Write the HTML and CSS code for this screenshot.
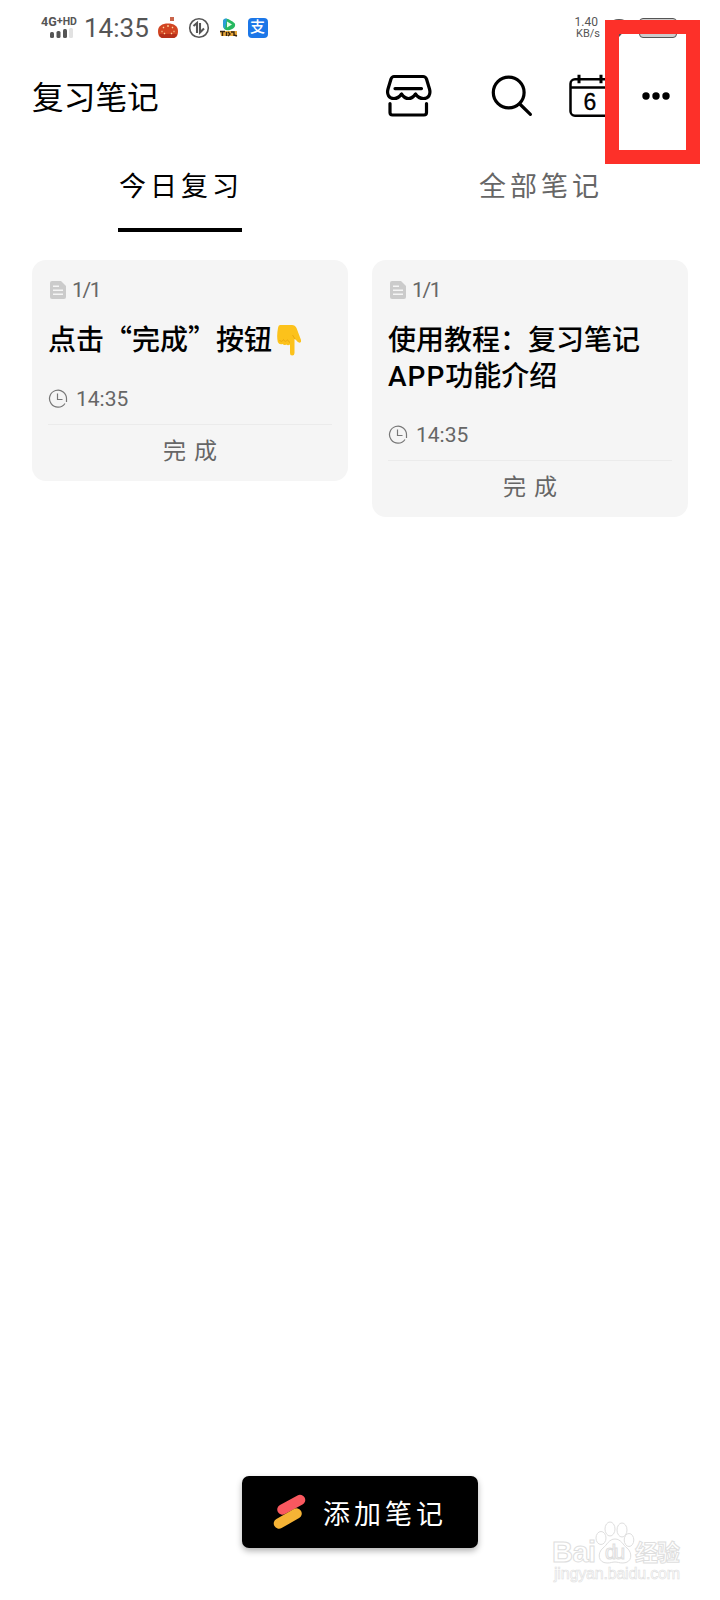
FILE: index.html
```html
<!DOCTYPE html>
<html lang="zh-CN">
<head>
<meta charset="utf-8">
<title>复习笔记</title>
<link rel="stylesheet" href="styles.css">
</head>
<body>
  <div class="status">
    <div class="signal">
      <span class="net">4G<sup>+</sup><small>HD</small></span>
      <svg width="24" height="10" viewBox="0 0 24 10">
        <g fill="#555">
          <rect x="0" y="4" width="4" height="6" rx="1.5"/>
          <rect x="6.500" y="3" width="4" height="7" rx="1.5"/>
          <rect x="13" y="1" width="4" height="9" rx="1.5"/>
        </g>
        <rect x="19" y="0" width="4" height="10" rx="1.5" fill="#e2e2e2"/>
      </svg>
    </div>
    <span class="time">14:35</span>
    <div class="apps">
      <svg width="22" height="22" viewBox="0 0 22 22">
        <rect x="13" y="0" width="4" height="4" fill="#c9654b"/>
        <path d="M1 14c0-5 4-7.500 10-7.500S21 9 21 14s-2 7-5 7H6c-3 0-5-2-5-7z" fill="#d24522"/>
        <path d="M2 17h18q-1 4-4 4H6q-3 0-4-4z" fill="#b5301b"/>
        <path d="M6 10l1 1M11 8v2M16 10l-1 1M4.500 14.500h1M17.500 14.500h-1M7 17l1-1M15 17l-1-1" stroke="#ffd9a0" stroke-width="1.300"/>
      </svg>
      <svg width="22" height="22" viewBox="0 0 22 22" fill="none" stroke="#555">
        <circle cx="11" cy="11" r="9.300" stroke-width="1.600"/>
        <path d="M5.500 9L9 6v10M12 6v9.500l4-4" stroke-width="2.100"/>
      </svg>
      <svg width="22" height="22" viewBox="0 0 22 22">
        <path d="M5 5c0-4 4-4 7-2s6 3 5 6-6 5-9 4-3-4-3-8z" fill="#26b860"/>
        <path d="M5 5c0-3 2-4 4-3.200L7 12c-2-1-2-4-2-7z" fill="#2b9edb"/>
        <path d="M9 4.500l5 3-5 3z" fill="#e8ffe8"/>
        <path d="M2 14h17v5H3z" fill="#e8a83c"/>
        <path d="M2 14.500h5M4.500 15v4M8.500 19v-4M10 15l2 2-2 2M13 15h3v4M16 18l3 1" stroke="#38250f" stroke-width="1.400" fill="none"/>
      </svg>
      <span class="alipay">支</span>
    </div>
    <div class="speed"><span>1.40</span><span>KB/s</span></div>
    <svg class="wifi" width="26" height="20" viewBox="0 0 26 20">
      <path d="M1 6q12-10 24 0L13 19z" fill="#555"/>
    </svg>
    <span class="battery"></span>
  </div>

  <div class="head">
    <h1>复习笔记</h1>
    <svg class="shop" width="48" height="46" viewBox="384 73 48 46">
      <g fill="none" stroke="#000" stroke-width="3.200" stroke-linecap="round" stroke-linejoin="round">
        <path d="M394 76.500h29q2.500 0 3.500 2.500l3 10c1.500 5.500-1 9.500-6 9.500q-5 0-8-4.500q-3 4.500-7 4.500t-7-4.500q-3 4.500-7.500 4.500c-5 0-7.500-4-6-9.500l3-10q1-2.500 3-2.500z"/>
        <path d="M395 88.600h26.500M390 103.500v9q0 2.500 2.500 2.500h31.500q2.500 0 2.500-2.500v-9"/>
      </g>
    </svg>
    <svg class="search" width="44" height="44" viewBox="490 74 44 44">
      <g fill="none" stroke="#000" stroke-width="3.200" stroke-linecap="round">
        <circle cx="508.700" cy="92.500" r="15.400"/>
        <path d="M519.800 104l10.600 10.300"/>
      </g>
    </svg>
    <svg class="calendar" width="44" height="46" viewBox="568 73.300 44 46">
      <g fill="none" stroke="#000" stroke-width="2.500">
        <rect x="570.500" y="79.500" width="40" height="36.500" rx="4.500"/>
        <path d="M571 87.700h39"/>
        <path d="M579 75v8.500M601 75v8.500" stroke-width="3"/>
      </g>
      <text x="590" y="110" class="day">6</text>
    </svg>
    <svg class="more" width="28" height="10" viewBox="0 0 28 10">
      <circle cx="4" cy="5" r="3.700"/>
      <circle cx="14" cy="5" r="3.700"/>
      <circle cx="24" cy="5" r="3.700"/>
    </svg>
  </div>

  <div class="tabs">
    <a class="tab active">今日复习</a>
    <a class="tab">全部笔记</a>
  </div>

  <div class="cards">
    <div class="card">
      <div class="count">
        <svg width="16" height="18" viewBox="0 0 16 18">
          <path d="M2 0h9l5 5v11q0 2-2 2H2q-2 0-2-2V2q0-2 2-2z" fill="#cbcbcb"/>
          <path d="M3 5.300h6M3 9.300h10M3 13.300h10" stroke="#f5f5f5" stroke-width="1.500"/>
        </svg>
        1/1
      </div>
      <h2>点击<span class="quote">“</span>完成<span class="quote">”</span>按钮<svg class="hand" width="26" height="32" viewBox="0 0 26 32">
        <path d="M4 1h12q3 0 4.500 3l4.500 12q.6 2.500-1.300 2.700-1.700.1-3.700-2.700l-1.500-1v14q0 2.500-2.300 2.500T14 29v-8.500q-2 1.500-3.800 0-2 1.300-3.600-.5Q3 21 1.800 18 .500 12 2 4q.4-3 2-3z" fill="#fcc21b"/>
        <path d="M3.500 16q2 3 4-.5 1.500 3.500 4 .3 1 2 2.500 2.700M19 15l-2.500-4" stroke="#e9a510" stroke-width=".9" fill="none"/>
      </svg></h2>
      <div class="due">
        <svg width="20" height="20" viewBox="0 0 20 20" fill="none" stroke="#777" stroke-width="1.200">
          <path d="M17 14.500A8.500 8.500 0 1 1 18.500 10v3M9.500 4.500v6h5"/>
        </svg>
        14:35
      </div>
      <a class="done">完成</a>
    </div>
    <div class="card">
      <div class="count">
        <svg width="16" height="18" viewBox="0 0 16 18">
          <path d="M2 0h9l5 5v11q0 2-2 2H2q-2 0-2-2V2q0-2 2-2z" fill="#cbcbcb"/>
          <path d="M3 5.300h6M3 9.300h10M3 13.300h10" stroke="#f5f5f5" stroke-width="1.500"/>
        </svg>
        1/1
      </div>
      <h2>使用教程：复习笔记<br><span class="latin">APP</span>功能介绍</h2>
      <div class="due">
        <svg width="20" height="20" viewBox="0 0 20 20" fill="none" stroke="#777" stroke-width="1.200">
          <path d="M17 14.500A8.500 8.500 0 1 1 18.500 10v3M9.500 4.500v6h5"/>
        </svg>
        14:35
      </div>
      <a class="done">完成</a>
    </div>
  </div>

  <a class="add">
    <svg width="34" height="36" viewBox="0 0 34 36" stroke-width="10.500" stroke-linecap="round">
      <path d="M9.500 15.500L27 6" stroke="#f9585f"/>
      <path d="M6 29.500L23.500 19.500" stroke="#f5b335"/>
    </svg>
    <span>添加笔记</span>
  </a>

  <div class="mark"></div>

  <svg class="watermark" width="140" height="76" viewBox="548 1514 140 76">
    <g fill="#fff" stroke="#dedede" stroke-width="1">
      <ellipse cx="601" cy="1538" rx="5" ry="6.500"/>
      <ellipse cx="610" cy="1529" rx="5" ry="7"/>
      <ellipse cx="622" cy="1530" rx="5" ry="7"/>
      <ellipse cx="629" cy="1540" rx="4.800" ry="6.500"/>
      <path d="M615 1539c6 0 8 6 12 9 6 5 5 15-4 15-4 0-5-1-8-1s-4 1-8 1c-9 0-10-10-4-15 4-3 6-9 12-9z"/>
      <text x="552" y="1562" class="baidu" textLength="44">Bai</text>
      <text x="605" y="1559" class="du" textLength="20">du</text>
      <text x="635" y="1561" class="jy" textLength="45">经验</text>
      <text x="554" y="1579" class="url" textLength="126">jingyan.baidu.com</text>
    </g>
  </svg>
</body>
</html>
```
FILE: styles.css
```css
body {
  margin: 0;
  min-height: 1600px;
  position: relative;
  background-color: #fff;
  color: #000;
  font-family: Roboto, "Noto Sans CJK SC", sans-serif;
}
svg { display: block; flex-shrink: 0; }
h1, h2 { margin: 0; }

.status {
  display: flex;
  align-items: center;
  height: 56px;
  padding-left: 41px;
  color: #555;
}
.signal {
  width: 43px;
  height: 22px;
}
.signal svg { margin: 1px 0 0 9px; }
.net {
  display: block;
  height: 10px;
  font-size: 12.5px;
  font-weight: bold;
  line-height: 10px;
  white-space: nowrap;
}
.net sup {
  font-size: 11px;
  line-height: 0;
  vertical-align: 2px;
}
.net small { font-size: 10.5px; vertical-align: 1px; }
.time {
  width: 73px;
  font-size: 26px;
}
.apps {
  display: flex;
  align-items: center;
  gap: 8.5px;
}
.apps svg:nth-child(3) { margin-right: -1px; }
.alipay {
  width: 20px;
  height: 20px;
  border-radius: 4px;
  background-color: #1c77e8;
  color: #fff;
  font-size: 15px;
  font-weight: 500;
  line-height: 19px;
  text-align: center;
}
.speed {
  display: flex;
  flex-direction: column;
  align-items: flex-end;
  width: 60px;
  margin-left: auto;
  font-size: 11px;
  line-height: 11px;
}
.speed span:first-child { font-size: 12px; margin-right: 2px; }
.wifi { margin-left: 6px; }
.battery {
  box-sizing: border-box;
  width: 38px;
  height: 20px;
  margin: 0 43px 0 7px;
  border: 1.5px solid #555;
  border-radius: 4px;
  background-color: #ccc;
}

.head {
  display: flex;
  align-items: center;
  height: 80px;
  padding: 0 50px 0 32px;
}
h1 {
  flex-grow: 1;
  padding-bottom: 3px;
  font-size: 31.7px;
  font-weight: normal;
}
.search { margin-left: 58px; }
.calendar { margin-left: 34px; }
.more { margin-left: 30px; }
.day {
  font-family: "Liberation Sans", Arial, sans-serif;
  font-size: 23px;
  text-anchor: middle;
  stroke: #000;
  stroke-width: 0.3px;
}

.tabs {
  display: grid;
  grid-template-columns: 360px 360px;
  justify-items: center;
}
.tab {
  box-sizing: border-box;
  width: 124px;
  height: 96px;
  padding: 31px 0 0 1px;
  color: #666;
  font-size: 27px;
  letter-spacing: 4px;
  line-height: 40px;
  white-space: nowrap;
}
.active {
  color: #000;
  border-bottom: 4px solid #000;
}

.cards {
  display: grid;
  grid-template-columns: 316px 316px;
  column-gap: 24px;
  align-items: start;
  padding: 28px 32px;
}
.card {
  box-sizing: border-box;
  padding: 17px 16px 0;
  border-radius: 14px;
  background-color: #f5f5f5;
}
.count, .due {
  display: flex;
  align-items: center;
  color: #666;
  font-size: 21px;
}
.count {
  gap: 6px;
  height: 26px;
  padding-left: 2px;
  letter-spacing: -1.3px;
}
h2 {
  height: 36px;
  margin-top: 20px;
  font-size: 28px;
  font-weight: 500;
  line-height: 36px;
  white-space: nowrap;
}
.card:last-child h2 { height: 72px; }
/* full width quotes */
.quote {
  font-family: "Noto Sans CJK SC", sans-serif;
  line-height: 1;
}
.latin { letter-spacing: 1px; }
.hand {
  display: inline-block;
  margin: -6px 0 0 4px;
  vertical-align: -6px;
}
.due {
  gap: 8px;
  height: 28px;
  margin-top: 26px;
}
.done {
  display: block;
  height: 56px;
  margin-top: 11px;
  padding-left: 8px;
  border-top: 1px solid #ebebeb;
  color: #666;
  font-size: 23px;
  letter-spacing: 8px;
  line-height: 54px;
  text-align: center;
}

.add {
  position: absolute;
  left: 242px;
  top: 1476px;
  box-sizing: border-box;
  display: flex;
  align-items: center;
  gap: 16px;
  width: 236px;
  height: 72px;
  padding-left: 31px;
  border-radius: 7px;
  background-color: #000;
  box-shadow: 0 3px 6px rgba(0, 0, 0, 0.3);
  color: #fff;
  font-size: 27px;
  letter-spacing: 4px;
}

/* red frame round the menu button */
.mark {
  position: absolute;
  left: 605px;
  top: 20px;
  box-sizing: border-box;
  width: 95px;
  height: 144px;
  border: 14px solid #fd3029;
}

.watermark {
  position: absolute;
  left: 548px;
  top: 1514px;
}
.baidu, .du {
  font-family: "Liberation Sans", Arial, sans-serif;
  font-size: 29px;
  font-weight: bold;
}
.du { font-size: 20px; font-weight: normal; }
.jy { font-size: 23px; font-weight: bold; }
.url {
  font-family: "Liberation Sans", Arial, sans-serif;
  font-size: 16px;
  stroke-width: 0.6px;
}
```
